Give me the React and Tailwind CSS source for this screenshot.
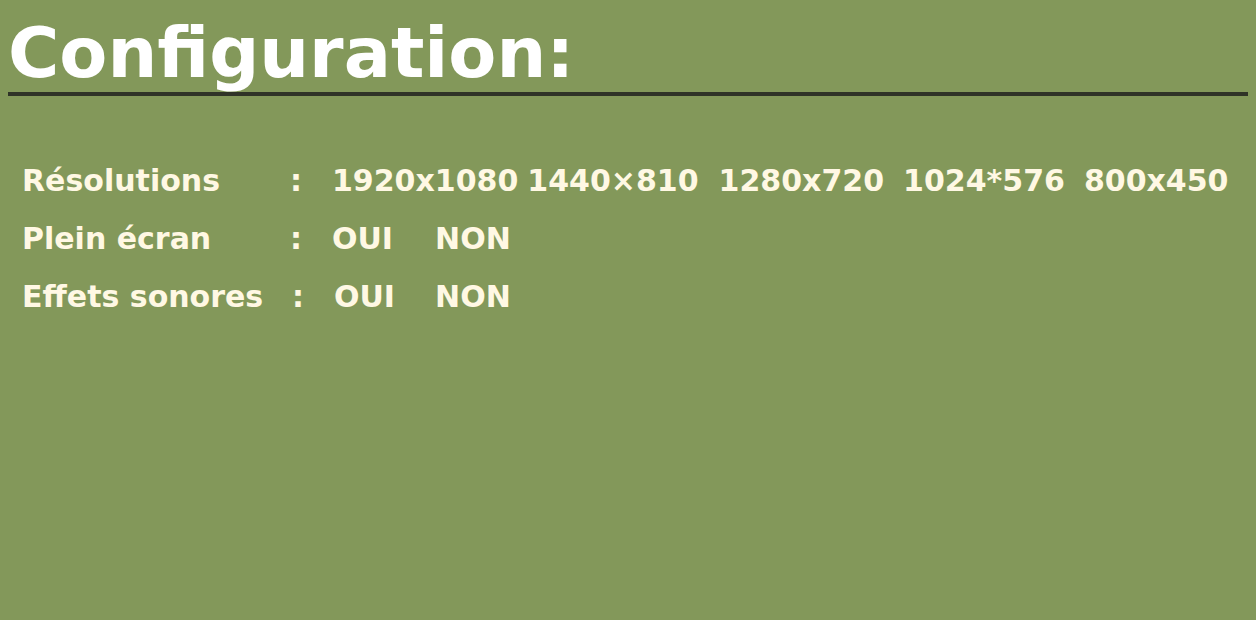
export default function App() {
  const font = { fontFamily: '"DejaVu Sans", "Liberation Sans", sans-serif' };
  return (
    <div className="w-[1256px] h-[620px] bg-[#83985a] overflow-hidden px-[8px] pt-[14px]" style={font}>
      <h1 className="h-[82px] text-[70px] leading-[78px] font-bold text-white border-b-[4px] border-[#2f3327]">
        Configuration:
      </h1>
      <div className="mt-[56px] pl-[14px] text-[30px] leading-[58px] font-bold text-[#fff8e4]">
        <div className="flex">
          <span className="w-[268px] shrink-0">Résolutions</span>
          <span className="w-[42px] shrink-0">:</span>
          <span>1920x1080</span>
          <span className="ml-[9px]">1440×810</span>
          <span className="ml-[20px]">1280x720</span>
          <span className="ml-[19px]">1024*576</span>
          <span className="ml-[19px]">800x450</span>
        </div>
        <div className="flex">
          <span className="w-[268px] shrink-0">Plein écran</span>
          <span className="w-[42px] shrink-0">:</span>
          <span>OUI</span>
          <span className="ml-[42px]">NON</span>
        </div>
        <div className="flex">
          <span className="w-[270px] shrink-0">Effets sonores</span>
          <span className="w-[42px] shrink-0">:</span>
          <span>OUI</span>
          <span className="ml-[40px]">NON</span>
        </div>
      </div>
    </div>
  );
}
